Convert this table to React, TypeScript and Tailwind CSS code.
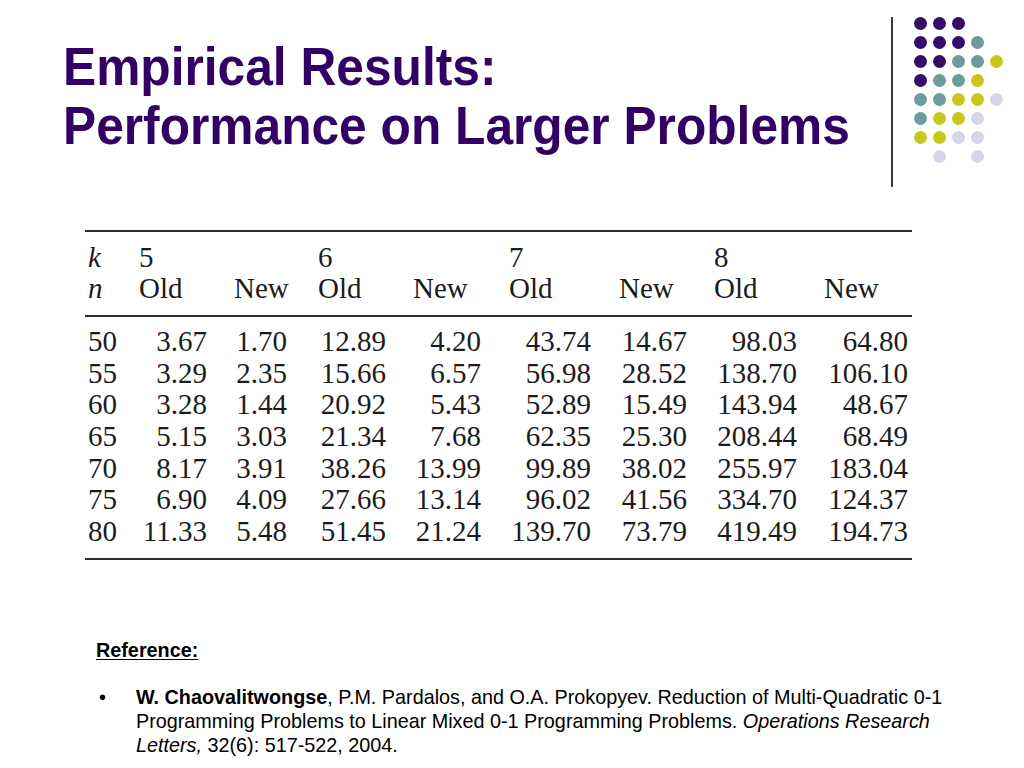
import React from "react";

const rows: string[][] = [
  ["50", "3.67", "1.70", "12.89", "4.20", "43.74", "14.67", "98.03", "64.80"],
  ["55", "3.29", "2.35", "15.66", "6.57", "56.98", "28.52", "138.70", "106.10"],
  ["60", "3.28", "1.44", "20.92", "5.43", "52.89", "15.49", "143.94", "48.67"],
  ["65", "5.15", "3.03", "21.34", "7.68", "62.35", "25.30", "208.44", "68.49"],
  ["70", "8.17", "3.91", "38.26", "13.99", "99.89", "38.02", "255.97", "183.04"],
  ["75", "6.90", "4.09", "27.66", "13.14", "96.02", "41.56", "334.70", "124.37"],
  ["80", "11.33", "5.48", "51.45", "21.24", "139.70", "73.79", "419.49", "194.73"],
];

// right padding for each numeric column so values line up like the scan
const numPad = [
  "text-left",
  "text-right pr-[27px]",
  "text-right pr-[31px]",
  "text-right pr-[27px]",
  "text-right pr-[28px]",
  "text-right pr-[28px]",
  "text-right pr-[27px]",
  "text-right pr-[27px]",
  "text-right",
];

const P = "bg-[#350b6b]";
const T = "bg-[#6c9c9c]";
const Y = "bg-[#c8c81c]";
const L = "bg-[#d6d6ea]";

const dots: (string | null)[][] = [
  [P, P, P, null, null],
  [P, P, P, T, null],
  [P, P, T, T, Y],
  [P, T, T, Y, null],
  [T, T, Y, Y, L],
  [T, Y, Y, L, null],
  [Y, Y, L, L, null],
  [null, L, null, L, null],
];

function Dots() {
  return (
    <div className="grid grid-cols-[13px_13px_13px_13px_13px] gap-x-[6px] gap-y-[6px]">
      {dots.flat().map((c, i) => (
        <div key={i} className={`w-[13px] h-[13px] rounded-full ${c ?? ""}`} />
      ))}
    </div>
  );
}

export default function App() {
  return (
    <main className="w-[1024px] h-[768px] bg-white overflow-hidden font-['Liberation_Sans',Arial,sans-serif]">
      <div className="flex items-start h-[230px]">
        <div className="w-[891px] pl-[63px] pt-[37px]">
          <h1 className="origin-left scale-x-[0.92] text-[54px] leading-[59px] font-bold text-[#330066] whitespace-nowrap">
            Empirical Results:
            <br />
            Performance on Larger Problems
          </h1>
        </div>
        <div className="w-[2px] h-[170px] mt-[17px] bg-[#3a3a3a]" />
        <div className="ml-[21px] mt-[17px]">
          <Dots />
        </div>
      </div>

      <div className="ml-[85px] w-[827px] border-t-2 border-b-2 border-[#2e2e2a] pl-[3px] pr-[4px] font-['Liberation_Serif','Times_New_Roman',serif] text-[29px] text-[#1c1c1c]">
        <div className="pt-[10px] pb-[11px] border-b-2 border-[#2e2e2a] -ml-[3px] pl-[3px] -mr-[4px] pr-[4px]">
          <div className="grid grid-cols-[51px_95px_84px_95px_96px_110px_95px_110px_84px] leading-[31px]">
            <div className="italic">k</div>
            <div>5</div>
            <div />
            <div>6</div>
            <div />
            <div>7</div>
            <div />
            <div>8</div>
            <div />
            <div className="italic">n</div>
            <div>Old</div>
            <div>New</div>
            <div>Old</div>
            <div>New</div>
            <div>Old</div>
            <div>New</div>
            <div>Old</div>
            <div>New</div>
          </div>
        </div>
        <div className="pt-[9px] pb-[10px] grid grid-cols-[51px_95px_84px_95px_96px_110px_95px_110px_84px] leading-[31.67px]">
          {rows.map((r, ri) =>
            r.map((v, ci) => (
              <div key={`${ri}-${ci}`} className={numPad[ci]}>
                {v}
              </div>
            ))
          )}
        </div>
      </div>

      <div className="pl-[96px] pt-[79px] text-[19.8px] text-black">
        <div className="font-bold underline underline-offset-2 leading-[22px]">Reference:</div>
        <div className="mt-[24px] flex leading-[24px]">
          <span className="w-[40px] pl-[3px]">•</span>
          <p className="whitespace-nowrap">
            <b>W. Chaovalitwongse</b>, P.M. Pardalos, and O.A. Prokopyev. Reduction of Multi-Quadratic 0-1
            <br />
            Programming Problems to Linear Mixed 0-1 Programming Problems. <i>Operations Research</i>
            <br />
            <i>Letters,</i> 32(6): 517-522, 2004.
          </p>
        </div>
      </div>
    </main>
  );
}
